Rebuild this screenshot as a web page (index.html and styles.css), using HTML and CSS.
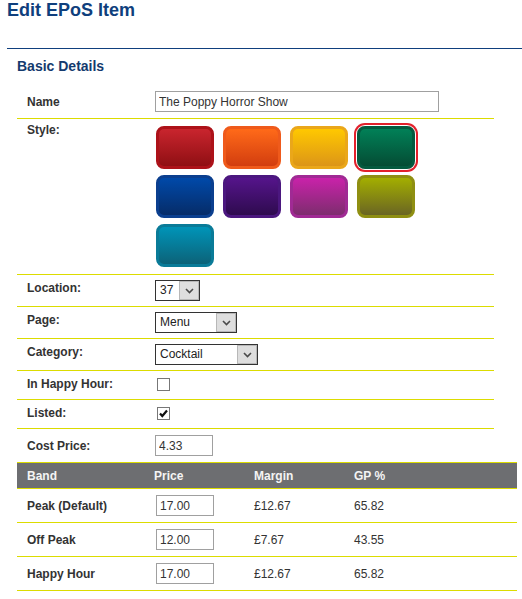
FILE: index.html
```html
<!DOCTYPE html>
<html lang="en">
<head>
<meta charset="utf-8">
<title>Edit EPoS Item</title>
<link rel="stylesheet" href="styles.css">
</head>
<body>
<div class="page">
  <header class="page-head"><h1>Edit EPoS Item</h1></header>
  <section class="section">
    <h2>Basic Details</h2>
    <div class="form">
      <div class="row row-field">
        <div class="label">Name</div>
        <div class="value"><input class="input input-wide" type="text" value="The Poppy Horror Show" readonly></div>
      </div>
      <div class="row row-style">
        <div class="label">Style:</div>
        <div class="value">
          <div class="swatches">
            <span class="swatch sw-red"></span>
            <span class="swatch sw-orange"></span>
            <span class="swatch sw-yellow"></span>
            <span class="swatch sw-green is-selected"></span>
            <span class="swatch sw-blue"></span>
            <span class="swatch sw-purple"></span>
            <span class="swatch sw-magenta"></span>
            <span class="swatch sw-olive"></span>
            <span class="swatch sw-teal"></span>
          </div>
        </div>
      </div>
      <div class="row row-select">
        <div class="label">Location:</div>
        <div class="value">
          <div class="select select-loc"><span class="select-text">37</span><span class="select-btn"><svg width="9" height="6" viewBox="0 0 9 6"><polyline points="1,1 4.5,4.5 8,1" fill="none" stroke="#4a4a4a" stroke-width="1.6"/></svg></span></div>
        </div>
      </div>
      <div class="row row-select">
        <div class="label">Page:</div>
        <div class="value">
          <div class="select select-page"><span class="select-text">Menu</span><span class="select-btn"><svg width="9" height="6" viewBox="0 0 9 6"><polyline points="1,1 4.5,4.5 8,1" fill="none" stroke="#4a4a4a" stroke-width="1.6"/></svg></span></div>
        </div>
      </div>
      <div class="row row-select">
        <div class="label">Category:</div>
        <div class="value">
          <div class="select select-cat"><span class="select-text">Cocktail</span><span class="select-btn"><svg width="9" height="6" viewBox="0 0 9 6"><polyline points="1,1 4.5,4.5 8,1" fill="none" stroke="#4a4a4a" stroke-width="1.6"/></svg></span></div>
        </div>
      </div>
      <div class="row row-check">
        <div class="label">In Happy Hour:</div>
        <div class="value"><span class="checkbox"></span></div>
      </div>
      <div class="row row-check">
        <div class="label">Listed:</div>
        <div class="value"><span class="checkbox"><svg width="11" height="11" viewBox="0 0 11 11"><path d="M2 5.5 L4.3 8 L9 2.5" fill="none" stroke="#111" stroke-width="2.2"/></svg></span></div>
      </div>
      <div class="row row-field row-last">
        <div class="label">Cost Price:</div>
        <div class="value"><input class="input input-small" type="text" value="4.33" readonly></div>
      </div>
    </div>

    <div class="bands">
      <div class="band-head">
        <div class="cell">Band</div>
        <div class="cell">Price</div>
        <div class="cell">Margin</div>
        <div class="cell">GP %</div>
      </div>
      <div class="band-row">
        <div class="cell cell-label">Peak (Default)</div>
        <div class="cell cell-input"><input class="input input-small" type="text" value="17.00" readonly></div>
        <div class="cell cell-text">£12.67</div>
        <div class="cell cell-text">65.82</div>
      </div>
      <div class="band-row">
        <div class="cell cell-label">Off Peak</div>
        <div class="cell cell-input"><input class="input input-small" type="text" value="12.00" readonly></div>
        <div class="cell cell-text">£7.67</div>
        <div class="cell cell-text">43.55</div>
      </div>
      <div class="band-row">
        <div class="cell cell-label">Happy Hour</div>
        <div class="cell cell-input"><input class="input input-small" type="text" value="17.00" readonly></div>
        <div class="cell cell-text">£12.67</div>
        <div class="cell cell-text">65.82</div>
      </div>
    </div>
  </section>
</div>
</body>
</html>
```

FILE: styles.css
```css
* { box-sizing: border-box; }

body {
  margin: 0;
  background: #fff;
  color: #333;
  font-family: "Liberation Sans", Arial, sans-serif;
  font-size: 12px;
}

.page { padding-left: 7px; }

.page-head {
  height: 49px;
  border-bottom: 1px solid #0f3f7d;
}

h1 {
  margin: 0;
  font-size: 18px;
  line-height: 21px;
  font-weight: bold;
  color: #0f3f7d;
}

.section { padding-left: 10px; }

h2 {
  margin: 9px 0 11px;
  font-size: 14px;
  line-height: 16px;
  font-weight: bold;
  color: #143a6e;
}

.form { width: 477px; }

.row {
  display: grid;
  grid-template-columns: 128px 1fr;
  border-bottom: 1px solid #dcdc00;
}
.row-last { border-bottom: none; }

.label {
  padding: 6px 10px 0;
  font-weight: bold;
  font-size: 12px;
  line-height: 14px;
  color: #333;
}

.value {
  display: flex;
  align-items: flex-start;
  padding: 5px 10px;
}

.row-field .label { padding-top: 10px; }
.row-field .value { padding: 6px 10px; }

.row-style .label { padding-top: 4px; }
.row-style .value { padding: 7px 10px 7px 11px; }

.row-check .value { padding: 7px 10px 8px 12px; }

.input {
  height: 21px;
  border: 1px solid #a0a0a0;
  padding: 0 3px;
  margin: 0;
  font-family: "Liberation Sans", Arial, sans-serif;
  font-size: 12px;
  color: #333;
  background: #fff;
  outline: none;
}
.input-wide { width: 284px; }
.input-small { width: 58px; }

/* style swatches */
.swatches {
  display: grid;
  grid-template-columns: repeat(4, 58px);
  column-gap: 9px;
  row-gap: 6px;
}
.swatch {
  display: block;
  width: 58px;
  height: 43px;
  border: 3px solid var(--rim);
  border-radius: 8px;
  background: linear-gradient(to bottom, var(--top), var(--bot));
}
.swatch.is-selected {
  box-shadow: 0 0 0 1px #fff, 0 0 0 3px #e3202b;
}
.sw-red     { --rim: #ad1219; --top: #c9252e; --bot: #8f0f13; }
.sw-orange  { --rim: #ef5a1b; --top: #ff6a19; --bot: #d23d0f; }
.sw-yellow  { --rim: #eaa71a; --top: #ffc800; --bot: #dc9518; }
.sw-green   { --rim: #045a3f; --top: #018057; --bot: #044c34; }
.sw-blue    { --rim: #0b3f8f; --top: #0049a9; --bot: #062c68; }
.sw-purple  { --rim: #4b177f; --top: #55148b; --bot: #2e0b4e; }
.sw-magenta { --rim: #a02a94; --top: #c922aa; --bot: #7d2d6e; }
.sw-olive   { --rim: #8f8f12; --top: #a3ae00; --bot: #6a6523; }
.sw-teal    { --rim: #0a7b98; --top: #0094b8; --bot: #0c6278; }

/* selects */
.select {
  display: flex;
  height: 21px;
  border: 1px solid #333;
  background: #fff;
}
.select-loc  { width: 45px; }
.select-page { width: 82px; }
.select-cat  { width: 103px; }
.select-text {
  flex: 1;
  padding-left: 4px;
  font-size: 12px;
  line-height: 19px;
  color: #222;
}
.select-btn {
  width: 20px;
  display: flex;
  align-items: center;
  justify-content: center;
  background: #dedede;
  border: 1px solid #b8b8b8;
}

/* checkbox */
.checkbox {
  display: flex;
  align-items: center;
  justify-content: center;
  width: 13px;
  height: 13px;
  border: 1px solid #777;
  background: #fff;
}

/* price bands */
.bands { width: 500px; }

.band-head,
.band-row {
  display: grid;
  grid-template-columns: 127px 100px 100px 1fr;
}

.band-head {
  background: #6d6e71;
  border-top: 1px solid #dcdc00;
  border-bottom: 1px solid #dcdc00;
}
.band-head .cell {
  padding: 6px 10px 5px;
  font-weight: bold;
  line-height: 14px;
  color: #f4f4f4;
}

.band-row { border-bottom: 1px solid #dcdc00; }
.band-row .cell {
  padding: 10px 10px 0;
  line-height: 14px;
}
.band-row .cell-label { font-weight: bold; }
.band-row .cell-input { padding: 6px 10px 6px 12px; }
```
